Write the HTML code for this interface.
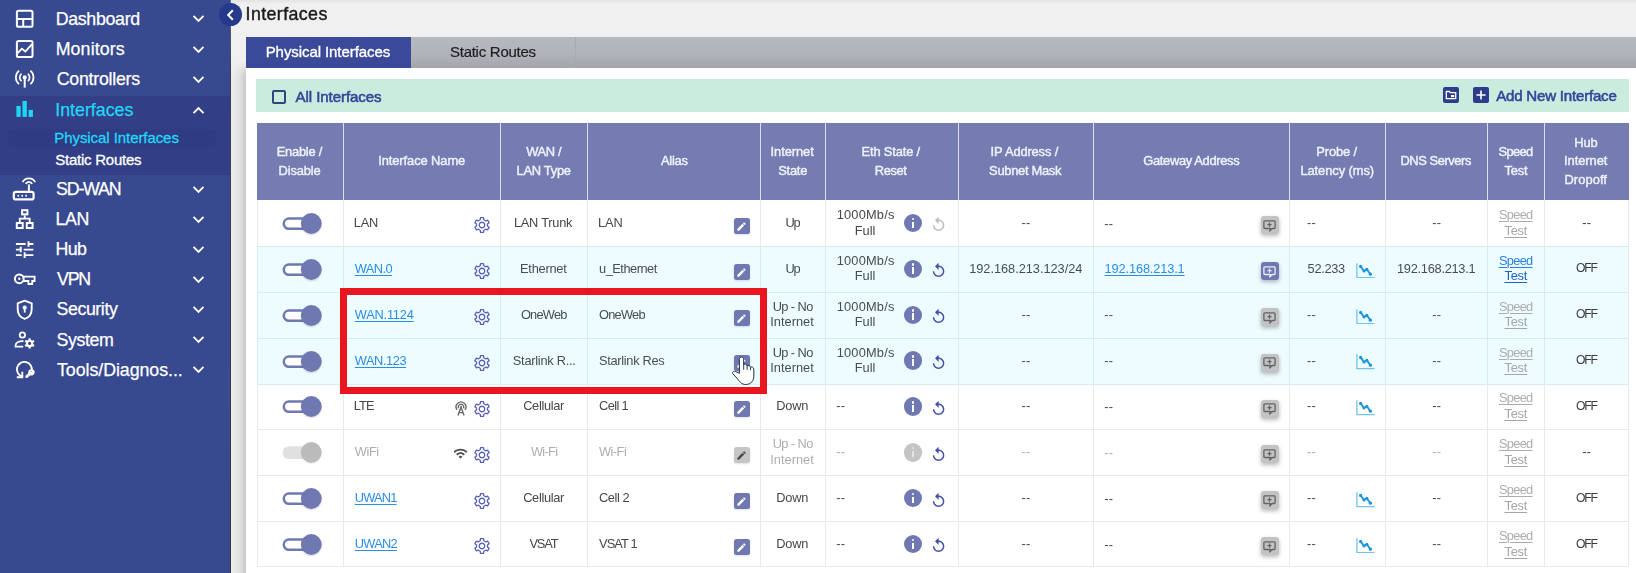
<!DOCTYPE html>
<html>
<head>
<meta charset="utf-8">
<title>Interfaces</title>
<style>
*{box-sizing:border-box;margin:0;padding:0}
html,body{width:1636px;height:573px;overflow:hidden;background:#f0f0f0;font-family:"Liberation Sans",sans-serif;}
body{position:relative}
#root{position:absolute;left:0;top:0;width:1636px;height:573px;overflow:hidden;filter:blur(0.4px)}
.abs{position:absolute}
.t{position:absolute;white-space:nowrap}
/* ---------- sidebar ---------- */
#side{position:absolute;left:0;top:0;width:230px;height:573px;background:#37498f;overflow:hidden}
#sideline{position:absolute;left:230px;top:0;width:1px;height:573px;background:linear-gradient(180deg,#6a7092 0,#3c3f52 12%,#35373f 100%)}
#side .act{position:absolute;left:0;top:96px;width:231px;height:79px;background:#323f86}
#side .sel{position:absolute;left:8px;top:129px;width:208px;height:19px;border-radius:4px;background:#2f3c84}
.chev{position:absolute;left:192px;width:13px;height:9px}
/* ---------- main ---------- */
#edge{position:absolute;left:231px;top:62px;width:15px;height:511px;background:linear-gradient(90deg,#ededed 0,#e2e2e2 55%,#c9c9c9 100%);-webkit-mask-image:linear-gradient(180deg,transparent 0,#000 14px);mask-image:linear-gradient(180deg,transparent 0,#000 14px)}
#topshade{position:absolute;left:231px;top:0;width:1405px;height:4px;background:linear-gradient(180deg,#e3e3e3,#f0f0f0)}
#collapse{position:absolute;left:219px;top:3px;width:23px;height:23px;border-radius:50%;background:#263a8c}
#tabs{position:absolute;left:246px;top:37px;width:1390px;height:31px;background:linear-gradient(180deg,#b6b9c0 0,#b0b2b9 60%,#a3a5ab 100%)}
#tab1{position:absolute;left:0;top:0;width:165px;height:31px;background:#3a4a99}
#tab2{position:absolute;left:165px;top:0;width:165px;height:31px;border-right:1px solid #a9abb2}
#panel{position:absolute;left:246px;top:68px;width:1390px;height:505px;background:#fff}
#gbar{position:absolute;left:256px;top:79px;width:1373px;height:33px;background:#c9ecdf}
#cb{position:absolute;left:272px;top:90px;width:14px;height:14px;border:2px solid #33447f;border-radius:2px}
.sq{position:absolute;top:87px;width:16px;height:16px;border-radius:2px;background:#2d3c8b}
#red{position:absolute;left:340px;top:288px;width:427px;height:106px;border:7px solid #e9151f}
</style>
</head>
<body>
<div id="root">
<div id="side">
  <div class="act"></div><div class="sel"></div>
<div class="t" style="left:55.70px;top:7.63px;font-size:17.8px;line-height:22.2px;color:#fff;letter-spacing:-0.312px;-webkit-text-stroke:0.25px #fff;">Dashboard</div>
<svg class="chev" style="top:14.3px" viewBox="0 0 13 9"><path d="M1.500 1.800L6.500 6.800L11.500 1.800" fill="none" stroke="#fff" stroke-width="1.900"/></svg>
<div class="t" style="left:55.70px;top:38.23px;font-size:17.8px;line-height:22.2px;color:#fff;letter-spacing:0.116px;-webkit-text-stroke:0.25px #fff;">Monitors</div>
<svg class="chev" style="top:44.9px" viewBox="0 0 13 9"><path d="M1.500 1.800L6.500 6.800L11.500 1.800" fill="none" stroke="#fff" stroke-width="1.900"/></svg>
<div class="t" style="left:56.70px;top:68.23px;font-size:17.8px;line-height:22.2px;color:#fff;letter-spacing:-0.258px;-webkit-text-stroke:0.25px #fff;">Controllers</div>
<svg class="chev" style="top:74.9px" viewBox="0 0 13 9"><path d="M1.500 1.800L6.500 6.800L11.500 1.800" fill="none" stroke="#fff" stroke-width="1.900"/></svg>
<div class="t" style="left:55.20px;top:98.93px;font-size:17.8px;line-height:22.2px;color:#22d6f5;letter-spacing:0.012px;-webkit-text-stroke:0.25px #22d6f5;">Interfaces</div>
<svg class="chev" style="top:105.6px" viewBox="0 0 13 9"><path d="M1.500 7.200L6.500 2.200L11.500 7.200" fill="none" stroke="#fff" stroke-width="1.900"/></svg>
<div class="t" style="left:56.10px;top:177.93px;font-size:17.8px;line-height:22.2px;color:#fff;letter-spacing:-1.200px;-webkit-text-stroke:0.25px #fff;">SD-WAN</div>
<svg class="chev" style="top:184.6px" viewBox="0 0 13 9"><path d="M1.500 1.800L6.500 6.800L11.500 1.800" fill="none" stroke="#fff" stroke-width="1.900"/></svg>
<div class="t" style="left:55.50px;top:208.13px;font-size:17.8px;line-height:22.2px;color:#fff;letter-spacing:-0.325px;-webkit-text-stroke:0.25px #fff;">LAN</div>
<svg class="chev" style="top:214.8px" viewBox="0 0 13 9"><path d="M1.500 1.800L6.500 6.800L11.500 1.800" fill="none" stroke="#fff" stroke-width="1.900"/></svg>
<div class="t" style="left:55.50px;top:237.83px;font-size:17.8px;line-height:22.2px;color:#fff;letter-spacing:-0.665px;-webkit-text-stroke:0.25px #fff;">Hub</div>
<svg class="chev" style="top:244.5px" viewBox="0 0 13 9"><path d="M1.500 1.800L6.500 6.800L11.500 1.800" fill="none" stroke="#fff" stroke-width="1.900"/></svg>
<div class="t" style="left:57.00px;top:268.03px;font-size:17.8px;line-height:22.2px;color:#fff;letter-spacing:-1.200px;-webkit-text-stroke:0.25px #fff;">VPN</div>
<svg class="chev" style="top:274.7px" viewBox="0 0 13 9"><path d="M1.500 1.800L6.500 6.800L11.500 1.800" fill="none" stroke="#fff" stroke-width="1.900"/></svg>
<div class="t" style="left:56.50px;top:297.83px;font-size:17.8px;line-height:22.2px;color:#fff;letter-spacing:-0.420px;-webkit-text-stroke:0.25px #fff;">Security</div>
<svg class="chev" style="top:304.5px" viewBox="0 0 13 9"><path d="M1.500 1.800L6.500 6.800L11.500 1.800" fill="none" stroke="#fff" stroke-width="1.900"/></svg>
<div class="t" style="left:56.50px;top:328.53px;font-size:17.8px;line-height:22.2px;color:#fff;letter-spacing:-0.374px;-webkit-text-stroke:0.25px #fff;">System</div>
<svg class="chev" style="top:335.2px" viewBox="0 0 13 9"><path d="M1.500 1.800L6.500 6.800L11.500 1.800" fill="none" stroke="#fff" stroke-width="1.900"/></svg>
<div class="t" style="left:57.00px;top:358.53px;font-size:17.8px;line-height:22.2px;color:#fff;letter-spacing:-0.051px;-webkit-text-stroke:0.25px #fff;">Tools/Diagnos...</div>
<svg class="chev" style="top:365.2px" viewBox="0 0 13 9"><path d="M1.500 1.800L6.500 6.800L11.500 1.800" fill="none" stroke="#fff" stroke-width="1.900"/></svg>
<div class="t" style="left:54.30px;top:128.80px;font-size:15px;line-height:18.8px;color:#22d6f5;letter-spacing:-0.072px;-webkit-text-stroke:0.3px #22d6f5;">Physical Interfaces</div>
<div class="t" style="left:55.30px;top:150.60px;font-size:15px;line-height:18.8px;color:#fff;letter-spacing:-0.251px;-webkit-text-stroke:0.3px #fff;">Static Routes</div>
<svg class="abs" style="left:0;top:0;width:231px;height:573px" viewBox="0 0 231 573"><rect x="16.9" y="10.8" width="15.6" height="16" rx="1.6" fill="none" stroke="#fff" stroke-width="2"/><path d="M16.9 19H32.5M23.2 19V26.8" fill="none" stroke="#fff" stroke-width="2" /><rect x="16.9" y="41" width="15.6" height="16" rx="1.6" fill="none" stroke="#fff" stroke-width="2"/><path d="M17.6 53.2L22 48.600L25.300 51.700L31.800 44.300" fill="none" stroke="#fff" stroke-width="1.8" stroke-linejoin="round"/><circle cx="24.7" cy="77.4" r="2.1" fill="#fff"/><path d="M24.7 77.4V87.6" fill="none" stroke="#fff" stroke-width="2" /><path d="M21.55 81.15A4.9 4.9 0 0 1 21.55 73.65" fill="none" stroke="#fff" stroke-width="1.7" /><path d="M27.85 73.65A4.9 4.9 0 0 1 27.85 81.15" fill="none" stroke="#fff" stroke-width="1.7" /><path d="M19.04 84.14A8.8 8.8 0 0 1 19.04 70.66" fill="none" stroke="#fff" stroke-width="1.7" /><path d="M30.36 70.66A8.8 8.8 0 0 1 30.36 84.14" fill="none" stroke="#fff" stroke-width="1.7" /><rect x="16.4" y="105.9" width="4.3" height="11.0" fill="#20d5f4"/><rect x="22.5" y="100.9" width="4.3" height="16.0" fill="#20d5f4"/><rect x="28.6" y="109.9" width="4.3" height="7.0" fill="#20d5f4"/><rect x="13.8" y="191.9" width="19.8" height="7.5" rx="2" fill="none" stroke="#fff" stroke-width="2.2"/><circle cx="18.3" cy="195.7" r="1" fill="#fff"/><circle cx="22.2" cy="195.7" r="1" fill="#fff"/><circle cx="26.1" cy="195.7" r="1" fill="#fff"/><path d="M28.9 184.4V191.2" fill="none" stroke="#fff" stroke-width="2" /><path d="M22.63 182.07A7.1 7.1 0 0 1 35.17 182.07" fill="none" stroke="#fff" stroke-width="1.8" /><path d="M25.73 183.92A3.5 3.5 0 0 1 32.07 183.92" fill="none" stroke="#fff" stroke-width="1.8" /><rect x="22.1" y="210.2" width="5.3" height="4.2" fill="none" stroke="#fff" stroke-width="2"/><rect x="16.8" y="223" width="5.9" height="5" fill="none" stroke="#fff" stroke-width="2"/><rect x="26.8" y="223" width="5.8" height="5" fill="none" stroke="#fff" stroke-width="2"/><path d="M24.750 215.4V218.6M19.750 222.2V218.6H29.700V222.2" fill="none" stroke="#fff" stroke-width="1.8" /><g transform="translate(13 238.4) scale(0.97 0.93)"><path fill="#fff" d="M3 17v2h6v-2H3zM3 5v2h10V5H3zm10 16v-2h8v-2h-8v-2h-2v6h2zM7 9v2H3v2h4v2h2V9H7zm14 4v-2H11v2h10zm-6-4h2V7h4V5h-4V3h-2v6z"/></g><circle cx="19.3" cy="278.8" r="4.4" fill="none" stroke="#fff" stroke-width="2"/><circle cx="19.3" cy="278.8" r="1.2" fill="#fff"/><path d="M23.6 276.6H34.6V281H32.2V284H28.4V281H23.6" fill="none" stroke="#fff" stroke-width="1.8" stroke-linejoin="miter"/><path d="M24.7 300.6L31.7 303.3V309C31.700 313.700 28.800 317.600 24.700 318.900C20.600 317.600 17.700 313.700 17.700 309V303.3Z" fill="none" stroke="#fff" stroke-width="1.9" stroke-linejoin="round"/><circle cx="24.7" cy="307.6" r="2.1" fill="#fff"/><rect x="23.8" y="308" width="1.8" height="4.6" fill="#fff"/><circle cx="22.4" cy="335" r="2.7" fill="none" stroke="#fff" stroke-width="1.800"/><path d="M23.5 341.2C19.500 340.800 15.600 342.600 15.600 345V346.600H23.200" fill="none" stroke="#fff" stroke-width="1.8" /><circle cx="29.6" cy="343.4" r="2.6" fill="none" stroke="#fff" stroke-width="2"/><path d="M32.37 345.00L34.02 345.95" fill="none" stroke="#fff" stroke-width="2.2" /><path d="M29.60 346.60L29.60 348.50" fill="none" stroke="#fff" stroke-width="2.2" /><path d="M26.83 345.00L25.18 345.95" fill="none" stroke="#fff" stroke-width="2.2" /><path d="M26.83 341.80L25.18 340.85" fill="none" stroke="#fff" stroke-width="2.2" /><path d="M29.60 340.20L29.60 338.30" fill="none" stroke="#fff" stroke-width="2.2" /><path d="M32.37 341.80L34.02 340.85" fill="none" stroke="#fff" stroke-width="2.2" /><path d="M22.08 376.53A7.5 7.5 0 1 1 31.74 370.96" fill="none" stroke="#fff" stroke-width="1.9" /><path d="M16.800 377.3H22.300V371.800" fill="none" stroke="#fff" stroke-width="1.9" /><path d="M26.600 376.600L30.600 373.100" fill="none" stroke="#fff" stroke-width="2.8" stroke-linecap="round"/><path d="M29.200 372.200A2.600 2.600 0 1 0 32.600 369.600L31.500 371.800L30.300 371.200Z" fill="#fff"/><circle cx="31.400" cy="372.300" r="2.300" fill="none" stroke="#fff" stroke-width="1.700"/></svg>
</div>
<div id="sideline"></div>
<div id="edge"></div>
<div id="topshade"></div>
<div id="tabs"><div id="tab1"></div><div id="tab2"></div></div>
<div id="panel"></div>
<div id="gbar"></div>
<div id="cb"></div>
<div class="sq" style="left:1443px"><svg class="abs" style="left:0;top:0;width:16px;height:16px" viewBox="0 0 16 16"><path d="M3.300 4.500H6.400L7.400 5.600H12.700V11.600H3.300Z" fill="none" stroke="#fff" stroke-width="1.300"/><rect x="8" y="8" width="3.200" height="2.200" fill="#fff"/></svg></div>
<div class="sq" style="left:1472.700px"><svg class="abs" style="left:0;top:0;width:16px;height:16px" viewBox="0 0 16 16"><path d="M8 3.400V12.600M3.400 8H12.600" fill="none" stroke="#fff" stroke-width="1.600"/></svg></div>
<div class="t" style="left:245.60px;top:3.03px;font-size:17.8px;line-height:22.2px;color:#1d1d1d;letter-spacing:0.401px;-webkit-text-stroke:0.45px #1d1d1d;">Interfaces</div>
<div class="t" style="left:265.70px;top:43.00px;font-size:15px;line-height:18.8px;color:#fff;letter-spacing:-0.077px;-webkit-text-stroke:0.35px #fff;">Physical Interfaces</div>
<div class="t" style="left:450.00px;top:43.00px;font-size:15px;line-height:18.8px;color:#1e1e1e;letter-spacing:-0.267px;-webkit-text-stroke:0.2px #1e1e1e;">Static Routes</div>
<div class="t" style="left:295.50px;top:87.72px;font-size:15.1px;line-height:18.9px;color:#34469a;letter-spacing:-0.085px;-webkit-text-stroke:0.55px #34469a;">All Interfaces</div>
<div class="t" style="left:1496.20px;top:87.32px;font-size:15.1px;line-height:18.9px;color:#34469a;letter-spacing:-0.223px;-webkit-text-stroke:0.55px #34469a;">Add New Interface</div>
<div class="abs" style="left:257px;top:123.3px;width:1371.6px;height:76.5px;background:#747cb1"></div>
<div class="abs" style="left:342.6px;top:123.3px;width:1.4px;height:76.5px;background:#dcdff0"></div>
<div class="abs" style="left:499.8px;top:123.3px;width:1.4px;height:76.5px;background:#dcdff0"></div>
<div class="abs" style="left:586.9px;top:123.3px;width:1.4px;height:76.5px;background:#dcdff0"></div>
<div class="abs" style="left:759.6px;top:123.3px;width:1.4px;height:76.5px;background:#dcdff0"></div>
<div class="abs" style="left:824.6px;top:123.3px;width:1.4px;height:76.5px;background:#dcdff0"></div>
<div class="abs" style="left:957.8px;top:123.3px;width:1.4px;height:76.5px;background:#dcdff0"></div>
<div class="abs" style="left:1092.8px;top:123.3px;width:1.4px;height:76.5px;background:#dcdff0"></div>
<div class="abs" style="left:1288.7px;top:123.3px;width:1.4px;height:76.5px;background:#dcdff0"></div>
<div class="abs" style="left:1384.7px;top:123.3px;width:1.4px;height:76.5px;background:#dcdff0"></div>
<div class="abs" style="left:1486.7px;top:123.3px;width:1.4px;height:76.5px;background:#dcdff0"></div>
<div class="abs" style="left:1543.8px;top:123.3px;width:1.4px;height:76.5px;background:#dcdff0"></div>
<div class="t" style="left:276.70px;top:143.78px;font-size:12.9px;line-height:16.1px;color:#eef0fa;letter-spacing:-0.231px;-webkit-text-stroke:0.45px #eef0fa;">Enable /</div>
<div class="t" style="left:278.50px;top:162.58px;font-size:12.9px;line-height:16.1px;color:#eef0fa;letter-spacing:-0.120px;-webkit-text-stroke:0.45px #eef0fa;">Disable</div>
<div class="t" style="left:378.20px;top:153.18px;font-size:12.9px;line-height:16.1px;color:#eef0fa;letter-spacing:-0.081px;-webkit-text-stroke:0.45px #eef0fa;">Interface Name</div>
<div class="t" style="left:526.30px;top:143.78px;font-size:12.9px;line-height:16.1px;color:#eef0fa;letter-spacing:-0.394px;-webkit-text-stroke:0.45px #eef0fa;">WAN /</div>
<div class="t" style="left:516.50px;top:162.58px;font-size:12.9px;line-height:16.1px;color:#eef0fa;letter-spacing:-0.276px;-webkit-text-stroke:0.45px #eef0fa;">LAN Type</div>
<div class="t" style="left:660.90px;top:153.18px;font-size:12.9px;line-height:16.1px;color:#eef0fa;letter-spacing:-0.199px;-webkit-text-stroke:0.45px #eef0fa;">Alias</div>
<div class="t" style="left:770.60px;top:143.78px;font-size:12.9px;line-height:16.1px;color:#eef0fa;letter-spacing:-0.076px;-webkit-text-stroke:0.45px #eef0fa;">Internet</div>
<div class="t" style="left:778.20px;top:162.58px;font-size:12.9px;line-height:16.1px;color:#eef0fa;letter-spacing:-0.232px;-webkit-text-stroke:0.45px #eef0fa;">State</div>
<div class="t" style="left:861.50px;top:143.78px;font-size:12.9px;line-height:16.1px;color:#eef0fa;letter-spacing:-0.151px;-webkit-text-stroke:0.45px #eef0fa;">Eth State /</div>
<div class="t" style="left:874.80px;top:162.58px;font-size:12.9px;line-height:16.1px;color:#eef0fa;letter-spacing:-0.398px;-webkit-text-stroke:0.45px #eef0fa;">Reset</div>
<div class="t" style="left:990.60px;top:143.78px;font-size:12.9px;line-height:16.1px;color:#eef0fa;letter-spacing:-0.148px;-webkit-text-stroke:0.45px #eef0fa;">IP Address /</div>
<div class="t" style="left:989.10px;top:162.58px;font-size:12.9px;line-height:16.1px;color:#eef0fa;letter-spacing:-0.289px;-webkit-text-stroke:0.45px #eef0fa;">Subnet Mask</div>
<div class="t" style="left:1143.30px;top:153.18px;font-size:12.9px;line-height:16.1px;color:#eef0fa;letter-spacing:-0.335px;-webkit-text-stroke:0.45px #eef0fa;">Gateway Address</div>
<div class="t" style="left:1316.20px;top:143.78px;font-size:12.9px;line-height:16.1px;color:#eef0fa;letter-spacing:-0.097px;-webkit-text-stroke:0.45px #eef0fa;">Probe /</div>
<div class="t" style="left:1300.40px;top:162.58px;font-size:12.9px;line-height:16.1px;color:#eef0fa;letter-spacing:-0.073px;-webkit-text-stroke:0.45px #eef0fa;">Latency (ms)</div>
<div class="t" style="left:1400.40px;top:153.18px;font-size:12.9px;line-height:16.1px;color:#eef0fa;letter-spacing:-0.426px;-webkit-text-stroke:0.45px #eef0fa;">DNS Servers</div>
<div class="t" style="left:1498.50px;top:143.78px;font-size:12.9px;line-height:16.1px;color:#eef0fa;letter-spacing:-0.651px;-webkit-text-stroke:0.45px #eef0fa;">Speed</div>
<div class="t" style="left:1504.40px;top:162.58px;font-size:12.9px;line-height:16.1px;color:#eef0fa;letter-spacing:-0.153px;-webkit-text-stroke:0.45px #eef0fa;">Test</div>
<div class="t" style="left:1574.30px;top:135.38px;font-size:12.9px;line-height:16.1px;color:#eef0fa;letter-spacing:-0.139px;-webkit-text-stroke:0.45px #eef0fa;">Hub</div>
<div class="t" style="left:1564.00px;top:152.88px;font-size:12.9px;line-height:16.1px;color:#eef0fa;letter-spacing:-0.047px;-webkit-text-stroke:0.45px #eef0fa;">Internet</div>
<div class="t" style="left:1564.50px;top:171.78px;font-size:12.9px;line-height:16.1px;color:#eef0fa;letter-spacing:0.057px;-webkit-text-stroke:0.45px #eef0fa;">Dropoff</div>
<div class="abs" style="left:257px;top:199.8px;width:1371.6px;height:366.6px;background:#fff"></div>
<div class="abs" style="left:257px;top:246.2px;width:1371.6px;height:45.9px;background:#edfcff"></div>
<div class="abs" style="left:257px;top:292.0px;width:1371.6px;height:45.9px;background:#edfcff"></div>
<div class="abs" style="left:257px;top:337.9px;width:1371.6px;height:45.9px;background:#edfcff"></div>
<div class="abs" style="left:257px;top:245.9px;width:1371.6px;height:1px;background:#d8ebee"></div>
<div class="abs" style="left:256.5px;top:200.3px;width:1px;height:45.9px;background:#e8e9eb"></div>
<div class="abs" style="left:342.8px;top:200.3px;width:1px;height:45.9px;background:#e8e9eb"></div>
<div class="abs" style="left:500.0px;top:200.3px;width:1px;height:45.9px;background:#e8e9eb"></div>
<div class="abs" style="left:587.1px;top:200.3px;width:1px;height:45.9px;background:#e8e9eb"></div>
<div class="abs" style="left:759.8px;top:200.3px;width:1px;height:45.9px;background:#e8e9eb"></div>
<div class="abs" style="left:824.8px;top:200.3px;width:1px;height:45.9px;background:#e8e9eb"></div>
<div class="abs" style="left:958.0px;top:200.3px;width:1px;height:45.9px;background:#e8e9eb"></div>
<div class="abs" style="left:1093.0px;top:200.3px;width:1px;height:45.9px;background:#e8e9eb"></div>
<div class="abs" style="left:1288.9px;top:200.3px;width:1px;height:45.9px;background:#e8e9eb"></div>
<div class="abs" style="left:1384.9px;top:200.3px;width:1px;height:45.9px;background:#e8e9eb"></div>
<div class="abs" style="left:1486.9px;top:200.3px;width:1px;height:45.9px;background:#e8e9eb"></div>
<div class="abs" style="left:1544.0px;top:200.3px;width:1px;height:45.9px;background:#e8e9eb"></div>
<div class="abs" style="left:257px;top:291.7px;width:1371.6px;height:1px;background:#d8ebee"></div>
<div class="abs" style="left:256.5px;top:246.2px;width:1px;height:45.9px;background:#d8ebee"></div>
<div class="abs" style="left:342.8px;top:246.2px;width:1px;height:45.9px;background:#d8ebee"></div>
<div class="abs" style="left:500.0px;top:246.2px;width:1px;height:45.9px;background:#d8ebee"></div>
<div class="abs" style="left:587.1px;top:246.2px;width:1px;height:45.9px;background:#d8ebee"></div>
<div class="abs" style="left:759.8px;top:246.2px;width:1px;height:45.9px;background:#d8ebee"></div>
<div class="abs" style="left:824.8px;top:246.2px;width:1px;height:45.9px;background:#d8ebee"></div>
<div class="abs" style="left:958.0px;top:246.2px;width:1px;height:45.9px;background:#d8ebee"></div>
<div class="abs" style="left:1093.0px;top:246.2px;width:1px;height:45.9px;background:#d8ebee"></div>
<div class="abs" style="left:1288.9px;top:246.2px;width:1px;height:45.9px;background:#d8ebee"></div>
<div class="abs" style="left:1384.9px;top:246.2px;width:1px;height:45.9px;background:#d8ebee"></div>
<div class="abs" style="left:1486.9px;top:246.2px;width:1px;height:45.9px;background:#d8ebee"></div>
<div class="abs" style="left:1544.0px;top:246.2px;width:1px;height:45.9px;background:#d8ebee"></div>
<div class="abs" style="left:257px;top:337.6px;width:1371.6px;height:1px;background:#d8ebee"></div>
<div class="abs" style="left:256.5px;top:292.0px;width:1px;height:45.9px;background:#d8ebee"></div>
<div class="abs" style="left:342.8px;top:292.0px;width:1px;height:45.9px;background:#d8ebee"></div>
<div class="abs" style="left:500.0px;top:292.0px;width:1px;height:45.9px;background:#d8ebee"></div>
<div class="abs" style="left:587.1px;top:292.0px;width:1px;height:45.9px;background:#d8ebee"></div>
<div class="abs" style="left:759.8px;top:292.0px;width:1px;height:45.9px;background:#d8ebee"></div>
<div class="abs" style="left:824.8px;top:292.0px;width:1px;height:45.9px;background:#d8ebee"></div>
<div class="abs" style="left:958.0px;top:292.0px;width:1px;height:45.9px;background:#d8ebee"></div>
<div class="abs" style="left:1093.0px;top:292.0px;width:1px;height:45.9px;background:#d8ebee"></div>
<div class="abs" style="left:1288.9px;top:292.0px;width:1px;height:45.9px;background:#d8ebee"></div>
<div class="abs" style="left:1384.9px;top:292.0px;width:1px;height:45.9px;background:#d8ebee"></div>
<div class="abs" style="left:1486.9px;top:292.0px;width:1px;height:45.9px;background:#d8ebee"></div>
<div class="abs" style="left:1544.0px;top:292.0px;width:1px;height:45.9px;background:#d8ebee"></div>
<div class="abs" style="left:257px;top:383.5px;width:1371.6px;height:1px;background:#d8ebee"></div>
<div class="abs" style="left:256.5px;top:337.9px;width:1px;height:45.9px;background:#d8ebee"></div>
<div class="abs" style="left:342.8px;top:337.9px;width:1px;height:45.9px;background:#d8ebee"></div>
<div class="abs" style="left:500.0px;top:337.9px;width:1px;height:45.9px;background:#d8ebee"></div>
<div class="abs" style="left:587.1px;top:337.9px;width:1px;height:45.9px;background:#d8ebee"></div>
<div class="abs" style="left:759.8px;top:337.9px;width:1px;height:45.9px;background:#d8ebee"></div>
<div class="abs" style="left:824.8px;top:337.9px;width:1px;height:45.9px;background:#d8ebee"></div>
<div class="abs" style="left:958.0px;top:337.9px;width:1px;height:45.9px;background:#d8ebee"></div>
<div class="abs" style="left:1093.0px;top:337.9px;width:1px;height:45.9px;background:#d8ebee"></div>
<div class="abs" style="left:1288.9px;top:337.9px;width:1px;height:45.9px;background:#d8ebee"></div>
<div class="abs" style="left:1384.9px;top:337.9px;width:1px;height:45.9px;background:#d8ebee"></div>
<div class="abs" style="left:1486.9px;top:337.9px;width:1px;height:45.9px;background:#d8ebee"></div>
<div class="abs" style="left:1544.0px;top:337.9px;width:1px;height:45.9px;background:#d8ebee"></div>
<div class="abs" style="left:257px;top:429.3px;width:1371.6px;height:1px;background:#e8e9eb"></div>
<div class="abs" style="left:256.5px;top:383.8px;width:1px;height:45.9px;background:#e8e9eb"></div>
<div class="abs" style="left:342.8px;top:383.8px;width:1px;height:45.9px;background:#e8e9eb"></div>
<div class="abs" style="left:500.0px;top:383.8px;width:1px;height:45.9px;background:#e8e9eb"></div>
<div class="abs" style="left:587.1px;top:383.8px;width:1px;height:45.9px;background:#e8e9eb"></div>
<div class="abs" style="left:759.8px;top:383.8px;width:1px;height:45.9px;background:#e8e9eb"></div>
<div class="abs" style="left:824.8px;top:383.8px;width:1px;height:45.9px;background:#e8e9eb"></div>
<div class="abs" style="left:958.0px;top:383.8px;width:1px;height:45.9px;background:#e8e9eb"></div>
<div class="abs" style="left:1093.0px;top:383.8px;width:1px;height:45.9px;background:#e8e9eb"></div>
<div class="abs" style="left:1288.9px;top:383.8px;width:1px;height:45.9px;background:#e8e9eb"></div>
<div class="abs" style="left:1384.9px;top:383.8px;width:1px;height:45.9px;background:#e8e9eb"></div>
<div class="abs" style="left:1486.9px;top:383.8px;width:1px;height:45.9px;background:#e8e9eb"></div>
<div class="abs" style="left:1544.0px;top:383.8px;width:1px;height:45.9px;background:#e8e9eb"></div>
<div class="abs" style="left:257px;top:475.2px;width:1371.6px;height:1px;background:#e8e9eb"></div>
<div class="abs" style="left:256.5px;top:429.6px;width:1px;height:45.9px;background:#e8e9eb"></div>
<div class="abs" style="left:342.8px;top:429.6px;width:1px;height:45.9px;background:#e8e9eb"></div>
<div class="abs" style="left:500.0px;top:429.6px;width:1px;height:45.9px;background:#e8e9eb"></div>
<div class="abs" style="left:587.1px;top:429.6px;width:1px;height:45.9px;background:#e8e9eb"></div>
<div class="abs" style="left:759.8px;top:429.6px;width:1px;height:45.9px;background:#e8e9eb"></div>
<div class="abs" style="left:824.8px;top:429.6px;width:1px;height:45.9px;background:#e8e9eb"></div>
<div class="abs" style="left:958.0px;top:429.6px;width:1px;height:45.9px;background:#e8e9eb"></div>
<div class="abs" style="left:1093.0px;top:429.6px;width:1px;height:45.9px;background:#e8e9eb"></div>
<div class="abs" style="left:1288.9px;top:429.6px;width:1px;height:45.9px;background:#e8e9eb"></div>
<div class="abs" style="left:1384.9px;top:429.6px;width:1px;height:45.9px;background:#e8e9eb"></div>
<div class="abs" style="left:1486.9px;top:429.6px;width:1px;height:45.9px;background:#e8e9eb"></div>
<div class="abs" style="left:1544.0px;top:429.6px;width:1px;height:45.9px;background:#e8e9eb"></div>
<div class="abs" style="left:257px;top:521.1px;width:1371.6px;height:1px;background:#e8e9eb"></div>
<div class="abs" style="left:256.5px;top:475.5px;width:1px;height:45.9px;background:#e8e9eb"></div>
<div class="abs" style="left:342.8px;top:475.5px;width:1px;height:45.9px;background:#e8e9eb"></div>
<div class="abs" style="left:500.0px;top:475.5px;width:1px;height:45.9px;background:#e8e9eb"></div>
<div class="abs" style="left:587.1px;top:475.5px;width:1px;height:45.9px;background:#e8e9eb"></div>
<div class="abs" style="left:759.8px;top:475.5px;width:1px;height:45.9px;background:#e8e9eb"></div>
<div class="abs" style="left:824.8px;top:475.5px;width:1px;height:45.9px;background:#e8e9eb"></div>
<div class="abs" style="left:958.0px;top:475.5px;width:1px;height:45.9px;background:#e8e9eb"></div>
<div class="abs" style="left:1093.0px;top:475.5px;width:1px;height:45.9px;background:#e8e9eb"></div>
<div class="abs" style="left:1288.9px;top:475.5px;width:1px;height:45.9px;background:#e8e9eb"></div>
<div class="abs" style="left:1384.9px;top:475.5px;width:1px;height:45.9px;background:#e8e9eb"></div>
<div class="abs" style="left:1486.9px;top:475.5px;width:1px;height:45.9px;background:#e8e9eb"></div>
<div class="abs" style="left:1544.0px;top:475.5px;width:1px;height:45.9px;background:#e8e9eb"></div>
<div class="abs" style="left:257px;top:566.1px;width:1371.6px;height:1px;background:#e8e9eb"></div>
<div class="abs" style="left:256.5px;top:521.4px;width:1px;height:45.0px;background:#e8e9eb"></div>
<div class="abs" style="left:342.8px;top:521.4px;width:1px;height:45.0px;background:#e8e9eb"></div>
<div class="abs" style="left:500.0px;top:521.4px;width:1px;height:45.0px;background:#e8e9eb"></div>
<div class="abs" style="left:587.1px;top:521.4px;width:1px;height:45.0px;background:#e8e9eb"></div>
<div class="abs" style="left:759.8px;top:521.4px;width:1px;height:45.0px;background:#e8e9eb"></div>
<div class="abs" style="left:824.8px;top:521.4px;width:1px;height:45.0px;background:#e8e9eb"></div>
<div class="abs" style="left:958.0px;top:521.4px;width:1px;height:45.0px;background:#e8e9eb"></div>
<div class="abs" style="left:1093.0px;top:521.4px;width:1px;height:45.0px;background:#e8e9eb"></div>
<div class="abs" style="left:1288.9px;top:521.4px;width:1px;height:45.0px;background:#e8e9eb"></div>
<div class="abs" style="left:1384.9px;top:521.4px;width:1px;height:45.0px;background:#e8e9eb"></div>
<div class="abs" style="left:1486.9px;top:521.4px;width:1px;height:45.0px;background:#e8e9eb"></div>
<div class="abs" style="left:1544.0px;top:521.4px;width:1px;height:45.0px;background:#e8e9eb"></div>
<div class="abs" style="left:1628.1px;top:199.8px;width:1px;height:366.6px;background:#e8e9eb"></div>
<svg class="abs" style="left:282.0px;top:212.9px;width:42.0px;height:24.0px;" viewBox="0 0 42 24"><rect x="1.800" y="5.550" width="30" height="10.300" rx="5.150" fill="#fff" stroke="#7078b2" stroke-width="2.500"/><circle cx="29.400" cy="11.600" r="10.900" fill="#000" opacity="0.040"/><circle cx="29.400" cy="12.100" r="10.600" fill="#000" opacity="0.050"/><circle cx="29.300" cy="10.500" r="10.400" fill="#7078b2"/></svg>
<div class="t" style="left:353.80px;top:215.00px;font-size:12.8px;line-height:16.0px;color:#474747;letter-spacing:-0.176px;">LAN</div>
<svg class="abs" style="left:471.5px;top:215.2px;width:20.0px;height:20.0px;" viewBox="-10 -10 20 20"><path d="M1.85 -5.23L1.49 -7.30L-1.49 -7.30L-1.85 -5.23L-3.60 -4.22L-5.58 -4.94L-7.07 -2.36L-5.46 -1.01L-5.46 1.01L-7.07 2.36L-5.58 4.94L-3.60 4.22L-1.85 5.23L-1.49 7.30L1.49 7.30L1.85 5.23L3.60 4.22L5.58 4.94L7.07 2.36L5.46 1.01L5.46 -1.01L7.07 -2.36L5.58 -4.94L3.60 -4.22Z" fill="none" stroke="#5a62b6" stroke-width="1.300" stroke-linejoin="round"/><circle cx="0" cy="0" r="2.750" fill="none" stroke="#5a62b6" stroke-width="1.300"/></svg>
<div class="t" style="left:513.95px;top:215.00px;font-size:12.8px;line-height:16.0px;color:#474747;letter-spacing:-0.248px;">LAN Trunk</div>
<div class="t" style="left:598.00px;top:215.00px;font-size:12.8px;line-height:16.0px;color:#474747;letter-spacing:-0.126px;">LAN</div>
<div class="abs" style="left:734.1px;top:217.8px;width:15.800px;height:16px;border-radius:2.500px;background:#7078b2;box-shadow:0 1px 2px rgba(0,0,0,.12)"></div><svg class="abs" style="left:735.9px;top:220.7px;width:11.0px;height:11.0px;" viewBox="0 0 24 24"><path fill="#fff" d="M3 17.25V21h3.750L17.81 9.94l-3.750-3.750L3 17.250zM20.71 7.040a.996.996 0 0 0 0-1.410l-2.340-2.340a.996.996 0 0 0-1.410 0l-1.830 1.830 3.750 3.750 1.830-1.830z"/></svg>
<div class="t" style="left:785.43px;top:215.00px;font-size:12.8px;line-height:16.0px;color:#474747;letter-spacing:-1.200px;">Up</div>
<div class="t" style="left:836.70px;top:207.00px;font-size:12.8px;line-height:16.0px;color:#474747;letter-spacing:0.200px;">1000Mb/s</div>
<div class="t" style="left:854.80px;top:222.60px;font-size:12.8px;line-height:16.0px;color:#474747;letter-spacing:0.008px;">Full</div>
<div class="abs" style="left:904.0px;top:213.8px;width:18.4px;height:18.4px;border-radius:50%;background:#7078b2"></div><div class="abs" style="left:911.9px;top:217.5px;width:2.6px;height:2.6px;border-radius:50%;background:#fff"></div><div class="abs" style="left:912.1px;top:221.5px;width:2.3px;height:6.6px;background:#fff"></div>
<svg class="abs" style="left:929.8px;top:216.2px;width:17.2px;height:17.2px;" viewBox="0 0 24 24"><path fill="#bdbdbd" d="M12 5V1L7 6l5 5V7c3.310 0 6 2.690 6 6s-2.690 6-6 6-6-2.690-6-6H4c0 4.420 3.580 8 8 8s8-3.580 8-8-3.580-8-8-8z"/></svg>
<div class="t" style="left:1021.54px;top:215.00px;font-size:12.8px;line-height:16.0px;color:#474747;letter-spacing:0.250px;">--</div>
<div class="t" style="left:1104.30px;top:215.50px;font-size:12.8px;line-height:16.0px;color:#474747;letter-spacing:0.250px;">--</div>
<div class="abs" style="left:1260.7px;top:216.0px;width:18px;height:18px;border-radius:3px;background:#c3c3c3;box-shadow:0 2px 4px rgba(0,0,0,.28)"></div><svg class="abs" style="left:1263.2px;top:219.8px;width:13.0px;height:12.0px;" viewBox="0 0 13 12"><path fill="none" stroke="#636363" stroke-width="1.300" stroke-linejoin="round" d="M1.800 0.900H11.200Q12.100 0.900 12.100 1.800V7.600Q12.100 8.500 11.200 8.500H9.200L6.700 11L7.500 8.500H1.800Q0.900 8.500 0.900 7.600V1.800Q0.900 0.900 1.800 0.900Z"/><path fill="none" stroke="#636363" stroke-width="1.300" d="M6.500 2.600V6.800M4.400 4.700H8.600"/></svg>
<div class="t" style="left:1306.90px;top:215.00px;font-size:12.8px;line-height:16.0px;color:#474747;letter-spacing:0.250px;">--</div>
<div class="t" style="left:1432.14px;top:215.00px;font-size:12.8px;line-height:16.0px;color:#474747;letter-spacing:0.250px;">--</div>
<div class="t" style="left:1498.90px;top:207.00px;font-size:12.8px;line-height:16.0px;color:#adadad;letter-spacing:-0.672px;text-decoration:underline;text-decoration-color:#adadad;text-underline-offset:1.5px;text-decoration-thickness:1px;">Speed</div>
<div class="t" style="left:1504.50px;top:222.60px;font-size:12.8px;line-height:16.0px;color:#a6a6a6;letter-spacing:-0.205px;text-decoration:underline;text-decoration-color:#a6a6a6;text-underline-offset:1.5px;text-decoration-thickness:1px;">Test</div>
<div class="t" style="left:1582.14px;top:215.00px;font-size:12.8px;line-height:16.0px;color:#3b3b3b;letter-spacing:0.250px;">--</div>
<svg class="abs" style="left:282.0px;top:258.8px;width:42.0px;height:24.0px;" viewBox="0 0 42 24"><rect x="1.800" y="5.550" width="30" height="10.300" rx="5.150" fill="#fff" stroke="#7078b2" stroke-width="2.500"/><circle cx="29.400" cy="11.600" r="10.900" fill="#000" opacity="0.040"/><circle cx="29.400" cy="12.100" r="10.600" fill="#000" opacity="0.050"/><circle cx="29.300" cy="10.500" r="10.400" fill="#7078b2"/></svg>
<div class="t" style="left:354.80px;top:260.87px;font-size:12.8px;line-height:16.0px;color:#2a8de6;letter-spacing:-0.584px;text-decoration:underline;text-decoration-color:#2a8de6;text-underline-offset:1.5px;text-decoration-thickness:1px;">WAN.0</div>
<svg class="abs" style="left:471.5px;top:261.1px;width:20.0px;height:20.0px;" viewBox="-10 -10 20 20"><path d="M1.85 -5.23L1.49 -7.30L-1.49 -7.30L-1.85 -5.23L-3.60 -4.22L-5.58 -4.94L-7.07 -2.36L-5.46 -1.01L-5.46 1.01L-7.07 2.36L-5.58 4.94L-3.60 4.22L-1.85 5.23L-1.49 7.30L1.49 7.30L1.85 5.23L3.60 4.22L5.58 4.94L7.07 2.36L5.46 1.01L5.46 -1.01L7.07 -2.36L5.58 -4.94L3.60 -4.22Z" fill="none" stroke="#5a62b6" stroke-width="1.300" stroke-linejoin="round"/><circle cx="0" cy="0" r="2.750" fill="none" stroke="#5a62b6" stroke-width="1.300"/></svg>
<div class="t" style="left:520.05px;top:260.87px;font-size:12.8px;line-height:16.0px;color:#474e50;letter-spacing:-0.246px;">Ethernet</div>
<div class="t" style="left:599.00px;top:260.87px;font-size:12.8px;line-height:16.0px;color:#474e50;letter-spacing:-0.484px;">u_Ethernet</div>
<div class="abs" style="left:734.1px;top:263.7px;width:15.800px;height:16px;border-radius:2.500px;background:#7078b2;box-shadow:0 1px 2px rgba(0,0,0,.12)"></div><svg class="abs" style="left:735.9px;top:266.6px;width:11.0px;height:11.0px;" viewBox="0 0 24 24"><path fill="#fff" d="M3 17.25V21h3.750L17.81 9.94l-3.750-3.750L3 17.250zM20.71 7.040a.996.996 0 0 0 0-1.410l-2.340-2.340a.996.996 0 0 0-1.410 0l-1.830 1.830 3.750 3.750 1.830-1.830z"/></svg>
<div class="t" style="left:785.43px;top:260.87px;font-size:12.8px;line-height:16.0px;color:#474e50;letter-spacing:-1.200px;">Up</div>
<div class="t" style="left:836.70px;top:252.87px;font-size:12.8px;line-height:16.0px;color:#474e50;letter-spacing:0.200px;">1000Mb/s</div>
<div class="t" style="left:854.80px;top:268.47px;font-size:12.8px;line-height:16.0px;color:#474e50;letter-spacing:0.008px;">Full</div>
<div class="abs" style="left:904.0px;top:259.7px;width:18.4px;height:18.4px;border-radius:50%;background:#7078b2"></div><div class="abs" style="left:911.9px;top:263.4px;width:2.6px;height:2.6px;border-radius:50%;background:#fff"></div><div class="abs" style="left:912.1px;top:267.4px;width:2.3px;height:6.6px;background:#fff"></div>
<svg class="abs" style="left:929.8px;top:262.1px;width:17.2px;height:17.2px;" viewBox="0 0 24 24"><path fill="#4250a5" d="M12 5V1L7 6l5 5V7c3.310 0 6 2.690 6 6s-2.690 6-6 6-6-2.690-6-6H4c0 4.420 3.580 8 8 8s8-3.580 8-8-3.580-8-8-8z"/></svg>
<div class="t" style="left:969.20px;top:260.87px;font-size:12.8px;line-height:16.0px;color:#474e50;letter-spacing:-0.038px;">192.168.213.123/24</div>
<div class="t" style="left:1104.60px;top:261.37px;font-size:12.8px;line-height:16.0px;color:#2a8de6;letter-spacing:-0.143px;text-decoration:underline;text-decoration-color:#2a8de6;text-underline-offset:1.5px;text-decoration-thickness:1px;">192.168.213.1</div>
<div class="abs" style="left:1260.7px;top:261.9px;width:18px;height:18px;border-radius:3px;background:#7078b2;box-shadow:0 2px 4px rgba(0,0,0,.28)"></div><svg class="abs" style="left:1263.2px;top:265.7px;width:13.0px;height:12.0px;" viewBox="0 0 13 12"><path fill="none" stroke="#eceefa" stroke-width="1.300" stroke-linejoin="round" d="M1.800 0.900H11.200Q12.100 0.900 12.100 1.800V7.600Q12.100 8.500 11.200 8.500H9.200L6.700 11L7.500 8.500H1.800Q0.900 8.500 0.900 7.600V1.800Q0.900 0.900 1.800 0.900Z"/><path fill="none" stroke="#eceefa" stroke-width="1.300" d="M6.500 2.600V6.800M4.400 4.700H8.600"/></svg>
<div class="t" style="left:1307.60px;top:260.87px;font-size:12.8px;line-height:16.0px;color:#474e50;letter-spacing:-0.325px;">52.233</div>
<svg class="abs" style="left:1356.1px;top:262.6px;width:19.0px;height:15.5px;" viewBox="0 0 19 15.500"><path fill="none" stroke="#74c2e8" stroke-width="1.300" d="M0.900 0.300V14.600H18.600"/><path fill="none" stroke="#1a95d8" stroke-width="1.900" stroke-linejoin="round" d="M4.600 3.400L8 8L10.800 6.300L14.400 11.200"/><circle cx="4.600" cy="3.400" r="1.600" fill="#1a95d8"/><circle cx="8" cy="8" r="1.500" fill="#1a95d8"/><circle cx="10.800" cy="6.300" r="1.500" fill="#1a95d8"/><circle cx="14.400" cy="11.200" r="1.600" fill="#1a95d8"/></svg>
<div class="t" style="left:1397.00px;top:260.87px;font-size:12.8px;line-height:16.0px;color:#474e50;letter-spacing:-0.268px;">192.168.213.1</div>
<div class="t" style="left:1498.90px;top:252.87px;font-size:12.8px;line-height:16.0px;color:#2b7fe2;letter-spacing:-0.672px;text-decoration:underline;text-decoration-color:#2b7fe2;text-underline-offset:1.5px;text-decoration-thickness:1px;">Speed</div>
<div class="t" style="left:1504.50px;top:268.47px;font-size:12.8px;line-height:16.0px;color:#1d61c8;letter-spacing:-0.205px;text-decoration:underline;text-decoration-color:#1d61c8;text-underline-offset:1.5px;text-decoration-thickness:1px;">Test</div>
<div class="t" style="left:1575.89px;top:261.48px;font-size:12.2px;line-height:15.2px;color:#3b3b3b;letter-spacing:-1.200px;">OFF</div>
<svg class="abs" style="left:282.0px;top:304.7px;width:42.0px;height:24.0px;" viewBox="0 0 42 24"><rect x="1.800" y="5.550" width="30" height="10.300" rx="5.150" fill="#fff" stroke="#7078b2" stroke-width="2.500"/><circle cx="29.400" cy="11.600" r="10.900" fill="#000" opacity="0.040"/><circle cx="29.400" cy="12.100" r="10.600" fill="#000" opacity="0.050"/><circle cx="29.300" cy="10.500" r="10.400" fill="#7078b2"/></svg>
<div class="t" style="left:354.80px;top:306.74px;font-size:12.8px;line-height:16.0px;color:#2a8de6;letter-spacing:-0.205px;text-decoration:underline;text-decoration-color:#2a8de6;text-underline-offset:1.5px;text-decoration-thickness:1px;">WAN.1124</div>
<svg class="abs" style="left:471.5px;top:307.0px;width:20.0px;height:20.0px;" viewBox="-10 -10 20 20"><path d="M1.85 -5.23L1.49 -7.30L-1.49 -7.30L-1.85 -5.23L-3.60 -4.22L-5.58 -4.94L-7.07 -2.36L-5.46 -1.01L-5.46 1.01L-7.07 2.36L-5.58 4.94L-3.60 4.22L-1.85 5.23L-1.49 7.30L1.49 7.30L1.85 5.23L3.60 4.22L5.58 4.94L7.07 2.36L5.46 1.01L5.46 -1.01L7.07 -2.36L5.58 -4.94L3.60 -4.22Z" fill="none" stroke="#5a62b6" stroke-width="1.300" stroke-linejoin="round"/><circle cx="0" cy="0" r="2.750" fill="none" stroke="#5a62b6" stroke-width="1.300"/></svg>
<div class="t" style="left:520.90px;top:306.74px;font-size:12.8px;line-height:16.0px;color:#474e50;letter-spacing:-0.750px;">OneWeb</div>
<div class="t" style="left:599.00px;top:306.74px;font-size:12.8px;line-height:16.0px;color:#474e50;letter-spacing:-0.730px;">OneWeb</div>
<div class="abs" style="left:734.1px;top:309.6px;width:15.800px;height:16px;border-radius:2.500px;background:#7078b2;box-shadow:0 1px 2px rgba(0,0,0,.12)"></div><svg class="abs" style="left:735.9px;top:312.5px;width:11.0px;height:11.0px;" viewBox="0 0 24 24"><path fill="#fff" d="M3 17.25V21h3.750L17.81 9.94l-3.750-3.750L3 17.250zM20.71 7.040a.996.996 0 0 0 0-1.410l-2.340-2.340a.996.996 0 0 0-1.410 0l-1.830 1.830 3.750 3.750 1.830-1.830z"/></svg>
<div class="t" style="left:772.70px;top:298.74px;font-size:12.8px;line-height:16.0px;color:#474e50;letter-spacing:-0.579px;">Up - No</div>
<div class="t" style="left:770.30px;top:314.34px;font-size:12.8px;line-height:16.0px;color:#474e50;letter-spacing:0.009px;">Internet</div>
<div class="t" style="left:836.70px;top:298.74px;font-size:12.8px;line-height:16.0px;color:#474e50;letter-spacing:0.200px;">1000Mb/s</div>
<div class="t" style="left:854.80px;top:314.34px;font-size:12.8px;line-height:16.0px;color:#474e50;letter-spacing:0.008px;">Full</div>
<div class="abs" style="left:904.0px;top:305.6px;width:18.4px;height:18.4px;border-radius:50%;background:#7078b2"></div><div class="abs" style="left:911.9px;top:309.3px;width:2.6px;height:2.6px;border-radius:50%;background:#fff"></div><div class="abs" style="left:912.1px;top:313.3px;width:2.3px;height:6.6px;background:#fff"></div>
<svg class="abs" style="left:929.8px;top:308.0px;width:17.2px;height:17.2px;" viewBox="0 0 24 24"><path fill="#4250a5" d="M12 5V1L7 6l5 5V7c3.310 0 6 2.690 6 6s-2.690 6-6 6-6-2.690-6-6H4c0 4.420 3.580 8 8 8s8-3.580 8-8-3.580-8-8-8z"/></svg>
<div class="t" style="left:1021.54px;top:306.74px;font-size:12.8px;line-height:16.0px;color:#474e50;letter-spacing:0.250px;">--</div>
<div class="t" style="left:1104.30px;top:307.24px;font-size:12.8px;line-height:16.0px;color:#474e50;letter-spacing:0.250px;">--</div>
<div class="abs" style="left:1260.7px;top:307.8px;width:18px;height:18px;border-radius:3px;background:#c3c3c3;box-shadow:0 2px 4px rgba(0,0,0,.28)"></div><svg class="abs" style="left:1263.2px;top:311.6px;width:13.0px;height:12.0px;" viewBox="0 0 13 12"><path fill="none" stroke="#636363" stroke-width="1.300" stroke-linejoin="round" d="M1.800 0.900H11.200Q12.100 0.900 12.100 1.800V7.600Q12.100 8.500 11.200 8.500H9.200L6.700 11L7.500 8.500H1.800Q0.900 8.500 0.900 7.600V1.800Q0.900 0.900 1.800 0.900Z"/><path fill="none" stroke="#636363" stroke-width="1.300" d="M6.500 2.600V6.800M4.400 4.700H8.600"/></svg>
<div class="t" style="left:1306.90px;top:306.74px;font-size:12.8px;line-height:16.0px;color:#474e50;letter-spacing:0.250px;">--</div>
<svg class="abs" style="left:1356.1px;top:308.5px;width:19.0px;height:15.5px;" viewBox="0 0 19 15.500"><path fill="none" stroke="#74c2e8" stroke-width="1.300" d="M0.900 0.300V14.600H18.600"/><path fill="none" stroke="#1a95d8" stroke-width="1.900" stroke-linejoin="round" d="M4.600 3.400L8 8L10.800 6.300L14.400 11.200"/><circle cx="4.600" cy="3.400" r="1.600" fill="#1a95d8"/><circle cx="8" cy="8" r="1.500" fill="#1a95d8"/><circle cx="10.800" cy="6.300" r="1.500" fill="#1a95d8"/><circle cx="14.400" cy="11.200" r="1.600" fill="#1a95d8"/></svg>
<div class="t" style="left:1432.14px;top:306.74px;font-size:12.8px;line-height:16.0px;color:#474e50;letter-spacing:0.250px;">--</div>
<div class="t" style="left:1498.90px;top:298.74px;font-size:12.8px;line-height:16.0px;color:#adadad;letter-spacing:-0.672px;text-decoration:underline;text-decoration-color:#adadad;text-underline-offset:1.5px;text-decoration-thickness:1px;">Speed</div>
<div class="t" style="left:1504.50px;top:314.34px;font-size:12.8px;line-height:16.0px;color:#a6a6a6;letter-spacing:-0.205px;text-decoration:underline;text-decoration-color:#a6a6a6;text-underline-offset:1.5px;text-decoration-thickness:1px;">Test</div>
<div class="t" style="left:1575.89px;top:307.35px;font-size:12.2px;line-height:15.2px;color:#3b3b3b;letter-spacing:-1.200px;">OFF</div>
<svg class="abs" style="left:282.0px;top:350.5px;width:42.0px;height:24.0px;" viewBox="0 0 42 24"><rect x="1.800" y="5.550" width="30" height="10.300" rx="5.150" fill="#fff" stroke="#7078b2" stroke-width="2.500"/><circle cx="29.400" cy="11.600" r="10.900" fill="#000" opacity="0.040"/><circle cx="29.400" cy="12.100" r="10.600" fill="#000" opacity="0.050"/><circle cx="29.300" cy="10.500" r="10.400" fill="#7078b2"/></svg>
<div class="t" style="left:354.80px;top:352.61px;font-size:12.8px;line-height:16.0px;color:#2a8de6;letter-spacing:-0.428px;text-decoration:underline;text-decoration-color:#2a8de6;text-underline-offset:1.5px;text-decoration-thickness:1px;">WAN.123</div>
<svg class="abs" style="left:471.5px;top:352.8px;width:20.0px;height:20.0px;" viewBox="-10 -10 20 20"><path d="M1.85 -5.23L1.49 -7.30L-1.49 -7.30L-1.85 -5.23L-3.60 -4.22L-5.58 -4.94L-7.07 -2.36L-5.46 -1.01L-5.46 1.01L-7.07 2.36L-5.58 4.94L-3.60 4.22L-1.85 5.23L-1.49 7.30L1.49 7.30L1.85 5.23L3.60 4.22L5.58 4.94L7.07 2.36L5.46 1.01L5.46 -1.01L7.07 -2.36L5.58 -4.94L3.60 -4.22Z" fill="none" stroke="#5a62b6" stroke-width="1.300" stroke-linejoin="round"/><circle cx="0" cy="0" r="2.750" fill="none" stroke="#5a62b6" stroke-width="1.300"/></svg>
<div class="t" style="left:512.85px;top:352.61px;font-size:12.8px;line-height:16.0px;color:#474e50;letter-spacing:-0.257px;">Starlink R...</div>
<div class="t" style="left:599.00px;top:352.61px;font-size:12.8px;line-height:16.0px;color:#474e50;letter-spacing:-0.299px;">Starlink Res</div>
<div class="abs" style="left:734.1px;top:355.4px;width:15.800px;height:16px;border-radius:2.500px;background:#7078b2;box-shadow:0 1px 2px rgba(0,0,0,.12)"></div><svg class="abs" style="left:735.9px;top:358.3px;width:11.0px;height:11.0px;" viewBox="0 0 24 24"><path fill="#fff" d="M3 17.25V21h3.750L17.81 9.94l-3.750-3.750L3 17.250zM20.71 7.040a.996.996 0 0 0 0-1.410l-2.340-2.340a.996.996 0 0 0-1.410 0l-1.830 1.830 3.750 3.750 1.830-1.830z"/></svg>
<div class="t" style="left:772.70px;top:344.61px;font-size:12.8px;line-height:16.0px;color:#474e50;letter-spacing:-0.579px;">Up - No</div>
<div class="t" style="left:770.30px;top:360.21px;font-size:12.8px;line-height:16.0px;color:#474e50;letter-spacing:0.009px;">Internet</div>
<div class="t" style="left:836.70px;top:344.61px;font-size:12.8px;line-height:16.0px;color:#474e50;letter-spacing:0.200px;">1000Mb/s</div>
<div class="t" style="left:854.80px;top:360.21px;font-size:12.8px;line-height:16.0px;color:#474e50;letter-spacing:0.008px;">Full</div>
<div class="abs" style="left:904.0px;top:351.4px;width:18.4px;height:18.4px;border-radius:50%;background:#7078b2"></div><div class="abs" style="left:911.9px;top:355.1px;width:2.6px;height:2.6px;border-radius:50%;background:#fff"></div><div class="abs" style="left:912.1px;top:359.1px;width:2.3px;height:6.6px;background:#fff"></div>
<svg class="abs" style="left:929.8px;top:353.8px;width:17.2px;height:17.2px;" viewBox="0 0 24 24"><path fill="#4250a5" d="M12 5V1L7 6l5 5V7c3.310 0 6 2.690 6 6s-2.690 6-6 6-6-2.690-6-6H4c0 4.420 3.580 8 8 8s8-3.580 8-8-3.580-8-8-8z"/></svg>
<div class="t" style="left:1021.54px;top:352.61px;font-size:12.8px;line-height:16.0px;color:#474e50;letter-spacing:0.250px;">--</div>
<div class="t" style="left:1104.30px;top:353.11px;font-size:12.8px;line-height:16.0px;color:#474e50;letter-spacing:0.250px;">--</div>
<div class="abs" style="left:1260.7px;top:353.6px;width:18px;height:18px;border-radius:3px;background:#c3c3c3;box-shadow:0 2px 4px rgba(0,0,0,.28)"></div><svg class="abs" style="left:1263.2px;top:357.4px;width:13.0px;height:12.0px;" viewBox="0 0 13 12"><path fill="none" stroke="#636363" stroke-width="1.300" stroke-linejoin="round" d="M1.800 0.900H11.200Q12.100 0.900 12.100 1.800V7.600Q12.100 8.500 11.200 8.500H9.200L6.700 11L7.500 8.500H1.800Q0.900 8.500 0.900 7.600V1.800Q0.900 0.900 1.800 0.900Z"/><path fill="none" stroke="#636363" stroke-width="1.300" d="M6.500 2.600V6.800M4.400 4.700H8.600"/></svg>
<div class="t" style="left:1306.90px;top:352.61px;font-size:12.8px;line-height:16.0px;color:#474e50;letter-spacing:0.250px;">--</div>
<svg class="abs" style="left:1356.1px;top:354.3px;width:19.0px;height:15.5px;" viewBox="0 0 19 15.500"><path fill="none" stroke="#74c2e8" stroke-width="1.300" d="M0.900 0.300V14.600H18.600"/><path fill="none" stroke="#1a95d8" stroke-width="1.900" stroke-linejoin="round" d="M4.600 3.400L8 8L10.800 6.300L14.400 11.200"/><circle cx="4.600" cy="3.400" r="1.600" fill="#1a95d8"/><circle cx="8" cy="8" r="1.500" fill="#1a95d8"/><circle cx="10.800" cy="6.300" r="1.500" fill="#1a95d8"/><circle cx="14.400" cy="11.200" r="1.600" fill="#1a95d8"/></svg>
<div class="t" style="left:1432.14px;top:352.61px;font-size:12.8px;line-height:16.0px;color:#474e50;letter-spacing:0.250px;">--</div>
<div class="t" style="left:1498.90px;top:344.61px;font-size:12.8px;line-height:16.0px;color:#adadad;letter-spacing:-0.672px;text-decoration:underline;text-decoration-color:#adadad;text-underline-offset:1.5px;text-decoration-thickness:1px;">Speed</div>
<div class="t" style="left:1504.50px;top:360.21px;font-size:12.8px;line-height:16.0px;color:#a6a6a6;letter-spacing:-0.205px;text-decoration:underline;text-decoration-color:#a6a6a6;text-underline-offset:1.5px;text-decoration-thickness:1px;">Test</div>
<div class="t" style="left:1575.89px;top:353.22px;font-size:12.2px;line-height:15.2px;color:#3b3b3b;letter-spacing:-1.200px;">OFF</div>
<svg class="abs" style="left:282.0px;top:396.4px;width:42.0px;height:24.0px;" viewBox="0 0 42 24"><rect x="1.800" y="5.550" width="30" height="10.300" rx="5.150" fill="#fff" stroke="#7078b2" stroke-width="2.500"/><circle cx="29.400" cy="11.600" r="10.900" fill="#000" opacity="0.040"/><circle cx="29.400" cy="12.100" r="10.600" fill="#000" opacity="0.050"/><circle cx="29.300" cy="10.500" r="10.400" fill="#7078b2"/></svg>
<div class="t" style="left:353.80px;top:398.48px;font-size:12.8px;line-height:16.0px;color:#474747;letter-spacing:-0.942px;">LTE</div>
<svg class="abs" style="left:471.5px;top:398.7px;width:20.0px;height:20.0px;" viewBox="-10 -10 20 20"><path d="M1.85 -5.23L1.49 -7.30L-1.49 -7.30L-1.85 -5.23L-3.60 -4.22L-5.58 -4.94L-7.07 -2.36L-5.46 -1.01L-5.46 1.01L-7.07 2.36L-5.58 4.94L-3.60 4.22L-1.85 5.23L-1.49 7.30L1.49 7.30L1.85 5.23L3.60 4.22L5.58 4.94L7.07 2.36L5.46 1.01L5.46 -1.01L7.07 -2.36L5.58 -4.94L3.60 -4.22Z" fill="none" stroke="#5a62b6" stroke-width="1.300" stroke-linejoin="round"/><circle cx="0" cy="0" r="2.750" fill="none" stroke="#5a62b6" stroke-width="1.300"/></svg>
<svg class="abs" style="left:452.6px;top:398.7px;width:16.0px;height:18.0px;" viewBox="-8 -8 16 18"><path d="M-4.01 2.81A4.9 4.9 0 1 1 4.01 2.81" fill="none" stroke="#666" stroke-width="1.350"/><path d="M-2.54 1.18A2.8 2.8 0 1 1 2.54 1.18" fill="none" stroke="#666" stroke-width="1.350"/><circle cx="0" cy="0" r="1.100" fill="#666"/><path d="M0 0.200L-3.100 8.600M0 0.200L3.100 8.600M-1.700 5.600H1.700" fill="none" stroke="#666" stroke-width="1.350"/></svg>
<div class="t" style="left:523.20px;top:398.48px;font-size:12.8px;line-height:16.0px;color:#474747;letter-spacing:-0.332px;">Cellular</div>
<div class="t" style="left:599.00px;top:398.48px;font-size:12.8px;line-height:16.0px;color:#474747;letter-spacing:-0.600px;">Cell 1</div>
<div class="abs" style="left:734.1px;top:401.3px;width:15.800px;height:16px;border-radius:2.500px;background:#7078b2;box-shadow:0 1px 2px rgba(0,0,0,.12)"></div><svg class="abs" style="left:735.9px;top:404.2px;width:11.0px;height:11.0px;" viewBox="0 0 24 24"><path fill="#fff" d="M3 17.25V21h3.750L17.81 9.94l-3.750-3.750L3 17.250zM20.71 7.040a.996.996 0 0 0 0-1.410l-2.340-2.340a.996.996 0 0 0-1.410 0l-1.830 1.830 3.750 3.750 1.830-1.830z"/></svg>
<div class="t" style="left:776.30px;top:398.48px;font-size:12.8px;line-height:16.0px;color:#474747;letter-spacing:-0.200px;">Down</div>
<div class="t" style="left:836.20px;top:398.48px;font-size:12.8px;line-height:16.0px;color:#474747;letter-spacing:0.250px;">--</div>
<div class="abs" style="left:904.0px;top:397.3px;width:18.4px;height:18.4px;border-radius:50%;background:#7078b2"></div><div class="abs" style="left:911.9px;top:401.0px;width:2.6px;height:2.6px;border-radius:50%;background:#fff"></div><div class="abs" style="left:912.1px;top:405.0px;width:2.3px;height:6.6px;background:#fff"></div>
<svg class="abs" style="left:929.8px;top:399.7px;width:17.2px;height:17.2px;" viewBox="0 0 24 24"><path fill="#4250a5" d="M12 5V1L7 6l5 5V7c3.310 0 6 2.690 6 6s-2.690 6-6 6-6-2.690-6-6H4c0 4.420 3.580 8 8 8s8-3.580 8-8-3.580-8-8-8z"/></svg>
<div class="t" style="left:1021.54px;top:398.48px;font-size:12.8px;line-height:16.0px;color:#474747;letter-spacing:0.250px;">--</div>
<div class="t" style="left:1104.30px;top:398.98px;font-size:12.8px;line-height:16.0px;color:#474747;letter-spacing:0.250px;">--</div>
<div class="abs" style="left:1260.7px;top:399.5px;width:18px;height:18px;border-radius:3px;background:#c3c3c3;box-shadow:0 2px 4px rgba(0,0,0,.28)"></div><svg class="abs" style="left:1263.2px;top:403.3px;width:13.0px;height:12.0px;" viewBox="0 0 13 12"><path fill="none" stroke="#636363" stroke-width="1.300" stroke-linejoin="round" d="M1.800 0.900H11.200Q12.100 0.900 12.100 1.800V7.600Q12.100 8.500 11.200 8.500H9.200L6.700 11L7.500 8.500H1.800Q0.900 8.500 0.900 7.600V1.800Q0.900 0.900 1.800 0.900Z"/><path fill="none" stroke="#636363" stroke-width="1.300" d="M6.500 2.600V6.800M4.400 4.700H8.600"/></svg>
<div class="t" style="left:1306.90px;top:398.48px;font-size:12.8px;line-height:16.0px;color:#474747;letter-spacing:0.250px;">--</div>
<svg class="abs" style="left:1356.1px;top:400.2px;width:19.0px;height:15.5px;" viewBox="0 0 19 15.500"><path fill="none" stroke="#74c2e8" stroke-width="1.300" d="M0.900 0.300V14.600H18.600"/><path fill="none" stroke="#1a95d8" stroke-width="1.900" stroke-linejoin="round" d="M4.600 3.400L8 8L10.800 6.300L14.400 11.200"/><circle cx="4.600" cy="3.400" r="1.600" fill="#1a95d8"/><circle cx="8" cy="8" r="1.500" fill="#1a95d8"/><circle cx="10.800" cy="6.300" r="1.500" fill="#1a95d8"/><circle cx="14.400" cy="11.200" r="1.600" fill="#1a95d8"/></svg>
<div class="t" style="left:1432.14px;top:398.48px;font-size:12.8px;line-height:16.0px;color:#474747;letter-spacing:0.250px;">--</div>
<div class="t" style="left:1498.90px;top:390.48px;font-size:12.8px;line-height:16.0px;color:#adadad;letter-spacing:-0.672px;text-decoration:underline;text-decoration-color:#adadad;text-underline-offset:1.5px;text-decoration-thickness:1px;">Speed</div>
<div class="t" style="left:1504.50px;top:406.08px;font-size:12.8px;line-height:16.0px;color:#a6a6a6;letter-spacing:-0.205px;text-decoration:underline;text-decoration-color:#a6a6a6;text-underline-offset:1.5px;text-decoration-thickness:1px;">Test</div>
<div class="t" style="left:1575.89px;top:399.09px;font-size:12.2px;line-height:15.2px;color:#3b3b3b;letter-spacing:-1.200px;">OFF</div>
<svg class="abs" style="left:282.0px;top:442.3px;width:42.0px;height:24.0px;" viewBox="0 0 42 24"><rect x="0.600" y="4.300" width="31" height="12.800" rx="6.400" fill="#e0e0e0"/><circle cx="29.400" cy="11.600" r="10.900" fill="#000" opacity="0.040"/><circle cx="29.300" cy="10.500" r="10.400" fill="#bbbbbb"/></svg>
<div class="t" style="left:354.80px;top:444.35px;font-size:12.8px;line-height:16.0px;color:#aeaeae;letter-spacing:-0.413px;">WiFi</div>
<svg class="abs" style="left:471.5px;top:444.6px;width:20.0px;height:20.0px;" viewBox="-10 -10 20 20"><path d="M1.85 -5.23L1.49 -7.30L-1.49 -7.30L-1.85 -5.23L-3.60 -4.22L-5.58 -4.94L-7.07 -2.36L-5.46 -1.01L-5.46 1.01L-7.07 2.36L-5.58 4.94L-3.60 4.22L-1.85 5.23L-1.49 7.30L1.49 7.30L1.85 5.23L3.60 4.22L5.58 4.94L7.07 2.36L5.46 1.01L5.46 -1.01L7.07 -2.36L5.58 -4.94L3.60 -4.22Z" fill="none" stroke="#5a62b6" stroke-width="1.300" stroke-linejoin="round"/><circle cx="0" cy="0" r="2.750" fill="none" stroke="#5a62b6" stroke-width="1.300"/></svg>
<svg class="abs" style="left:452.6px;top:445.9px;width:15.0px;height:15.0px;" viewBox="0 0 24 24"><path fill="#4c4c4c" d="M1 9l2 2c4.970-4.970 13.030-4.970 18 0l2-2C16.930 2.930 7.080 2.930 1 9zm8 8l3 3 3-3c-1.650-1.660-4.340-1.660-6 0zm-4-4l2 2c2.760-2.760 7.240-2.760 10 0l2-2C15.140 9.140 8.870 9.140 5 13z"/></svg>
<div class="t" style="left:530.95px;top:444.35px;font-size:12.8px;line-height:16.0px;color:#aeaeae;letter-spacing:-0.675px;">Wi-Fi</div>
<div class="t" style="left:599.00px;top:444.35px;font-size:12.8px;line-height:16.0px;color:#aeaeae;letter-spacing:-0.525px;">Wi-Fi</div>
<div class="abs" style="left:734.1px;top:447.2px;width:15.800px;height:16px;border-radius:2.500px;background:#c6c6c6;box-shadow:0 1px 2px rgba(0,0,0,.12)"></div><svg class="abs" style="left:735.9px;top:450.1px;width:11.0px;height:11.0px;" viewBox="0 0 24 24"><path fill="#4a4a4a" d="M3 17.25V21h3.750L17.81 9.94l-3.750-3.750L3 17.250zM20.71 7.040a.996.996 0 0 0 0-1.410l-2.340-2.340a.996.996 0 0 0-1.410 0l-1.830 1.830 3.750 3.750 1.830-1.830z"/></svg>
<div class="t" style="left:772.70px;top:436.35px;font-size:12.8px;line-height:16.0px;color:#aeaeae;letter-spacing:-0.579px;">Up - No</div>
<div class="t" style="left:770.30px;top:451.95px;font-size:12.8px;line-height:16.0px;color:#aeaeae;letter-spacing:0.009px;">Internet</div>
<div class="t" style="left:836.20px;top:444.35px;font-size:12.8px;line-height:16.0px;color:#aeaeae;letter-spacing:0.250px;">--</div>
<div class="abs" style="left:904.0px;top:443.2px;width:18.4px;height:18.4px;border-radius:50%;background:#c4c4c4"></div><div class="abs" style="left:911.9px;top:446.9px;width:2.6px;height:2.6px;border-radius:50%;background:#e4e4e4"></div><div class="abs" style="left:912.1px;top:450.9px;width:2.3px;height:6.6px;background:#e4e4e4"></div>
<svg class="abs" style="left:929.8px;top:445.6px;width:17.2px;height:17.2px;" viewBox="0 0 24 24"><path fill="#4250a5" d="M12 5V1L7 6l5 5V7c3.310 0 6 2.690 6 6s-2.690 6-6 6-6-2.690-6-6H4c0 4.420 3.580 8 8 8s8-3.580 8-8-3.580-8-8-8z"/></svg>
<div class="t" style="left:1021.54px;top:444.35px;font-size:12.8px;line-height:16.0px;color:#aeaeae;letter-spacing:0.250px;">--</div>
<div class="t" style="left:1104.30px;top:444.85px;font-size:12.8px;line-height:16.0px;color:#aeaeae;letter-spacing:0.250px;">--</div>
<div class="abs" style="left:1260.7px;top:445.4px;width:18px;height:18px;border-radius:3px;background:#c3c3c3;box-shadow:0 2px 4px rgba(0,0,0,.28)"></div><svg class="abs" style="left:1263.2px;top:449.2px;width:13.0px;height:12.0px;" viewBox="0 0 13 12"><path fill="none" stroke="#636363" stroke-width="1.300" stroke-linejoin="round" d="M1.800 0.900H11.200Q12.100 0.900 12.100 1.800V7.600Q12.100 8.500 11.200 8.500H9.200L6.700 11L7.500 8.500H1.800Q0.900 8.500 0.900 7.600V1.800Q0.900 0.900 1.800 0.900Z"/><path fill="none" stroke="#636363" stroke-width="1.300" d="M6.500 2.600V6.800M4.400 4.700H8.600"/></svg>
<div class="t" style="left:1306.90px;top:444.35px;font-size:12.8px;line-height:16.0px;color:#aeaeae;letter-spacing:0.250px;">--</div>
<div class="t" style="left:1432.14px;top:444.35px;font-size:12.8px;line-height:16.0px;color:#aeaeae;letter-spacing:0.250px;">--</div>
<div class="t" style="left:1498.90px;top:436.35px;font-size:12.8px;line-height:16.0px;color:#adadad;letter-spacing:-0.672px;text-decoration:underline;text-decoration-color:#adadad;text-underline-offset:1.5px;text-decoration-thickness:1px;">Speed</div>
<div class="t" style="left:1504.50px;top:451.95px;font-size:12.8px;line-height:16.0px;color:#a6a6a6;letter-spacing:-0.205px;text-decoration:underline;text-decoration-color:#a6a6a6;text-underline-offset:1.5px;text-decoration-thickness:1px;">Test</div>
<div class="t" style="left:1582.14px;top:444.35px;font-size:12.8px;line-height:16.0px;color:#3b3b3b;letter-spacing:0.250px;">--</div>
<svg class="abs" style="left:282.0px;top:488.2px;width:42.0px;height:24.0px;" viewBox="0 0 42 24"><rect x="1.800" y="5.550" width="30" height="10.300" rx="5.150" fill="#fff" stroke="#7078b2" stroke-width="2.500"/><circle cx="29.400" cy="11.600" r="10.900" fill="#000" opacity="0.040"/><circle cx="29.400" cy="12.100" r="10.600" fill="#000" opacity="0.050"/><circle cx="29.300" cy="10.500" r="10.400" fill="#7078b2"/></svg>
<div class="t" style="left:354.80px;top:490.22px;font-size:12.8px;line-height:16.0px;color:#2a8de6;letter-spacing:-0.805px;text-decoration:underline;text-decoration-color:#2a8de6;text-underline-offset:1.5px;text-decoration-thickness:1px;">UWAN1</div>
<svg class="abs" style="left:471.5px;top:490.5px;width:20.0px;height:20.0px;" viewBox="-10 -10 20 20"><path d="M1.85 -5.23L1.49 -7.30L-1.49 -7.30L-1.85 -5.23L-3.60 -4.22L-5.58 -4.94L-7.07 -2.36L-5.46 -1.01L-5.46 1.01L-7.07 2.36L-5.58 4.94L-3.60 4.22L-1.85 5.23L-1.49 7.30L1.49 7.30L1.85 5.23L3.60 4.22L5.58 4.94L7.07 2.36L5.46 1.01L5.46 -1.01L7.07 -2.36L5.58 -4.94L3.60 -4.22Z" fill="none" stroke="#5a62b6" stroke-width="1.300" stroke-linejoin="round"/><circle cx="0" cy="0" r="2.750" fill="none" stroke="#5a62b6" stroke-width="1.300"/></svg>
<div class="t" style="left:523.20px;top:490.22px;font-size:12.8px;line-height:16.0px;color:#474747;letter-spacing:-0.332px;">Cellular</div>
<div class="t" style="left:599.00px;top:490.22px;font-size:12.8px;line-height:16.0px;color:#474747;letter-spacing:-0.400px;">Cell 2</div>
<div class="abs" style="left:734.1px;top:493.1px;width:15.800px;height:16px;border-radius:2.500px;background:#7078b2;box-shadow:0 1px 2px rgba(0,0,0,.12)"></div><svg class="abs" style="left:735.9px;top:496.0px;width:11.0px;height:11.0px;" viewBox="0 0 24 24"><path fill="#fff" d="M3 17.25V21h3.750L17.81 9.94l-3.750-3.750L3 17.250zM20.71 7.040a.996.996 0 0 0 0-1.410l-2.340-2.340a.996.996 0 0 0-1.410 0l-1.830 1.830 3.750 3.750 1.830-1.830z"/></svg>
<div class="t" style="left:776.30px;top:490.22px;font-size:12.8px;line-height:16.0px;color:#474747;letter-spacing:-0.200px;">Down</div>
<div class="t" style="left:836.20px;top:490.22px;font-size:12.8px;line-height:16.0px;color:#474747;letter-spacing:0.250px;">--</div>
<div class="abs" style="left:904.0px;top:489.1px;width:18.4px;height:18.4px;border-radius:50%;background:#7078b2"></div><div class="abs" style="left:911.9px;top:492.8px;width:2.6px;height:2.6px;border-radius:50%;background:#fff"></div><div class="abs" style="left:912.1px;top:496.8px;width:2.3px;height:6.6px;background:#fff"></div>
<svg class="abs" style="left:929.8px;top:491.5px;width:17.2px;height:17.2px;" viewBox="0 0 24 24"><path fill="#4250a5" d="M12 5V1L7 6l5 5V7c3.310 0 6 2.690 6 6s-2.690 6-6 6-6-2.690-6-6H4c0 4.420 3.580 8 8 8s8-3.580 8-8-3.580-8-8-8z"/></svg>
<div class="t" style="left:1021.54px;top:490.22px;font-size:12.8px;line-height:16.0px;color:#474747;letter-spacing:0.250px;">--</div>
<div class="t" style="left:1104.30px;top:490.72px;font-size:12.8px;line-height:16.0px;color:#474747;letter-spacing:0.250px;">--</div>
<div class="abs" style="left:1260.7px;top:491.3px;width:18px;height:18px;border-radius:3px;background:#c3c3c3;box-shadow:0 2px 4px rgba(0,0,0,.28)"></div><svg class="abs" style="left:1263.2px;top:495.1px;width:13.0px;height:12.0px;" viewBox="0 0 13 12"><path fill="none" stroke="#636363" stroke-width="1.300" stroke-linejoin="round" d="M1.800 0.900H11.200Q12.100 0.900 12.100 1.800V7.600Q12.100 8.500 11.200 8.500H9.200L6.700 11L7.500 8.500H1.800Q0.900 8.500 0.900 7.600V1.800Q0.900 0.900 1.800 0.900Z"/><path fill="none" stroke="#636363" stroke-width="1.300" d="M6.500 2.600V6.800M4.400 4.700H8.600"/></svg>
<div class="t" style="left:1306.90px;top:490.22px;font-size:12.8px;line-height:16.0px;color:#474747;letter-spacing:0.250px;">--</div>
<svg class="abs" style="left:1356.1px;top:492.0px;width:19.0px;height:15.5px;" viewBox="0 0 19 15.500"><path fill="none" stroke="#74c2e8" stroke-width="1.300" d="M0.900 0.300V14.600H18.600"/><path fill="none" stroke="#1a95d8" stroke-width="1.900" stroke-linejoin="round" d="M4.600 3.400L8 8L10.800 6.300L14.400 11.200"/><circle cx="4.600" cy="3.400" r="1.600" fill="#1a95d8"/><circle cx="8" cy="8" r="1.500" fill="#1a95d8"/><circle cx="10.800" cy="6.300" r="1.500" fill="#1a95d8"/><circle cx="14.400" cy="11.200" r="1.600" fill="#1a95d8"/></svg>
<div class="t" style="left:1432.14px;top:490.22px;font-size:12.8px;line-height:16.0px;color:#474747;letter-spacing:0.250px;">--</div>
<div class="t" style="left:1498.90px;top:482.22px;font-size:12.8px;line-height:16.0px;color:#adadad;letter-spacing:-0.672px;text-decoration:underline;text-decoration-color:#adadad;text-underline-offset:1.5px;text-decoration-thickness:1px;">Speed</div>
<div class="t" style="left:1504.50px;top:497.82px;font-size:12.8px;line-height:16.0px;color:#a6a6a6;letter-spacing:-0.205px;text-decoration:underline;text-decoration-color:#a6a6a6;text-underline-offset:1.5px;text-decoration-thickness:1px;">Test</div>
<div class="t" style="left:1575.89px;top:490.83px;font-size:12.2px;line-height:15.2px;color:#3b3b3b;letter-spacing:-1.200px;">OFF</div>
<svg class="abs" style="left:282.0px;top:534.0px;width:42.0px;height:24.0px;" viewBox="0 0 42 24"><rect x="1.800" y="5.550" width="30" height="10.300" rx="5.150" fill="#fff" stroke="#7078b2" stroke-width="2.500"/><circle cx="29.400" cy="11.600" r="10.900" fill="#000" opacity="0.040"/><circle cx="29.400" cy="12.100" r="10.600" fill="#000" opacity="0.050"/><circle cx="29.300" cy="10.500" r="10.400" fill="#7078b2"/></svg>
<div class="t" style="left:354.80px;top:536.09px;font-size:12.8px;line-height:16.0px;color:#2a8de6;letter-spacing:-0.730px;text-decoration:underline;text-decoration-color:#2a8de6;text-underline-offset:1.5px;text-decoration-thickness:1px;">UWAN2</div>
<svg class="abs" style="left:471.5px;top:536.3px;width:20.0px;height:20.0px;" viewBox="-10 -10 20 20"><path d="M1.85 -5.23L1.49 -7.30L-1.49 -7.30L-1.85 -5.23L-3.60 -4.22L-5.58 -4.94L-7.07 -2.36L-5.46 -1.01L-5.46 1.01L-7.07 2.36L-5.58 4.94L-3.60 4.22L-1.85 5.23L-1.49 7.30L1.49 7.30L1.85 5.23L3.60 4.22L5.58 4.94L7.07 2.36L5.46 1.01L5.46 -1.01L7.07 -2.36L5.58 -4.94L3.60 -4.22Z" fill="none" stroke="#5a62b6" stroke-width="1.300" stroke-linejoin="round"/><circle cx="0" cy="0" r="2.750" fill="none" stroke="#5a62b6" stroke-width="1.300"/></svg>
<div class="t" style="left:529.45px;top:536.09px;font-size:12.8px;line-height:16.0px;color:#474747;letter-spacing:-1.119px;">VSAT</div>
<div class="t" style="left:599.00px;top:536.09px;font-size:12.8px;line-height:16.0px;color:#474747;letter-spacing:-0.866px;">VSAT 1</div>
<div class="abs" style="left:734.1px;top:538.9px;width:15.800px;height:16px;border-radius:2.500px;background:#7078b2;box-shadow:0 1px 2px rgba(0,0,0,.12)"></div><svg class="abs" style="left:735.9px;top:541.8px;width:11.0px;height:11.0px;" viewBox="0 0 24 24"><path fill="#fff" d="M3 17.25V21h3.750L17.81 9.94l-3.750-3.750L3 17.250zM20.71 7.040a.996.996 0 0 0 0-1.410l-2.340-2.340a.996.996 0 0 0-1.410 0l-1.830 1.830 3.750 3.750 1.830-1.830z"/></svg>
<div class="t" style="left:776.30px;top:536.09px;font-size:12.8px;line-height:16.0px;color:#474747;letter-spacing:-0.200px;">Down</div>
<div class="t" style="left:836.20px;top:536.09px;font-size:12.8px;line-height:16.0px;color:#474747;letter-spacing:0.250px;">--</div>
<div class="abs" style="left:904.0px;top:534.9px;width:18.4px;height:18.4px;border-radius:50%;background:#7078b2"></div><div class="abs" style="left:911.9px;top:538.6px;width:2.6px;height:2.6px;border-radius:50%;background:#fff"></div><div class="abs" style="left:912.1px;top:542.6px;width:2.3px;height:6.6px;background:#fff"></div>
<svg class="abs" style="left:929.8px;top:537.3px;width:17.2px;height:17.2px;" viewBox="0 0 24 24"><path fill="#4250a5" d="M12 5V1L7 6l5 5V7c3.310 0 6 2.690 6 6s-2.690 6-6 6-6-2.690-6-6H4c0 4.420 3.580 8 8 8s8-3.580 8-8-3.580-8-8-8z"/></svg>
<div class="t" style="left:1021.54px;top:536.09px;font-size:12.8px;line-height:16.0px;color:#474747;letter-spacing:0.250px;">--</div>
<div class="t" style="left:1104.30px;top:536.59px;font-size:12.8px;line-height:16.0px;color:#474747;letter-spacing:0.250px;">--</div>
<div class="abs" style="left:1260.7px;top:537.1px;width:18px;height:18px;border-radius:3px;background:#c3c3c3;box-shadow:0 2px 4px rgba(0,0,0,.28)"></div><svg class="abs" style="left:1263.2px;top:540.9px;width:13.0px;height:12.0px;" viewBox="0 0 13 12"><path fill="none" stroke="#636363" stroke-width="1.300" stroke-linejoin="round" d="M1.800 0.900H11.200Q12.100 0.900 12.100 1.800V7.600Q12.100 8.500 11.200 8.500H9.200L6.700 11L7.500 8.500H1.800Q0.900 8.500 0.900 7.600V1.800Q0.900 0.900 1.800 0.900Z"/><path fill="none" stroke="#636363" stroke-width="1.300" d="M6.500 2.600V6.800M4.400 4.700H8.600"/></svg>
<div class="t" style="left:1306.90px;top:536.09px;font-size:12.8px;line-height:16.0px;color:#474747;letter-spacing:0.250px;">--</div>
<svg class="abs" style="left:1356.1px;top:537.8px;width:19.0px;height:15.5px;" viewBox="0 0 19 15.500"><path fill="none" stroke="#74c2e8" stroke-width="1.300" d="M0.900 0.300V14.600H18.600"/><path fill="none" stroke="#1a95d8" stroke-width="1.900" stroke-linejoin="round" d="M4.600 3.400L8 8L10.800 6.300L14.400 11.200"/><circle cx="4.600" cy="3.400" r="1.600" fill="#1a95d8"/><circle cx="8" cy="8" r="1.500" fill="#1a95d8"/><circle cx="10.800" cy="6.300" r="1.500" fill="#1a95d8"/><circle cx="14.400" cy="11.200" r="1.600" fill="#1a95d8"/></svg>
<div class="t" style="left:1432.14px;top:536.09px;font-size:12.8px;line-height:16.0px;color:#474747;letter-spacing:0.250px;">--</div>
<div class="t" style="left:1498.90px;top:528.09px;font-size:12.8px;line-height:16.0px;color:#adadad;letter-spacing:-0.672px;text-decoration:underline;text-decoration-color:#adadad;text-underline-offset:1.5px;text-decoration-thickness:1px;">Speed</div>
<div class="t" style="left:1504.50px;top:543.69px;font-size:12.8px;line-height:16.0px;color:#a6a6a6;letter-spacing:-0.205px;text-decoration:underline;text-decoration-color:#a6a6a6;text-underline-offset:1.5px;text-decoration-thickness:1px;">Test</div>
<div class="t" style="left:1575.89px;top:536.70px;font-size:12.2px;line-height:15.2px;color:#3b3b3b;letter-spacing:-1.200px;">OFF</div>
<div id="red"></div>
<div id="collapse"><svg class="abs" style="left:4.500px;top:4.500px;width:14px;height:14px" viewBox="0 0 14 14"><path d="M8.800 2.300L4.200 7L8.800 11.700" fill="none" stroke="#fff" stroke-width="2"/></svg></div>
<svg class="abs" style="left:0;top:0;width:1636px;height:573px;pointer-events:none" viewBox="0 0 1636 573"><path d="M739.37 373.30 L739.37 359.37 C739.37 356.23 743.66 356.23 743.66 359.37 L743.66 364.92 C744.29 363.66 747.02 363.87 747.12 366.18 C747.85 364.92 750.58 365.34 750.58 367.64 C751.41 366.39 753.82 367.02 753.82 369.53 L753.82 376.13 C753.82 380.31 751.41 384.50 745.65 384.50 C741.47 384.50 739.37 381.36 736.75 377.91 L732.77 373.72 C731.73 371.94 734.14 370.58 735.71 371.62 Z" fill="#fdfefe" stroke="#1c2b44" stroke-width="1" stroke-linejoin="round"/><path d="M743.66 364.92L743.66 369.84M747.12 366.18L747.12 369.84M750.58 367.64L750.58 370.37" fill="none" stroke="#1c2b44" stroke-width="0.900"/></svg>
</div>
</body>
</html>
